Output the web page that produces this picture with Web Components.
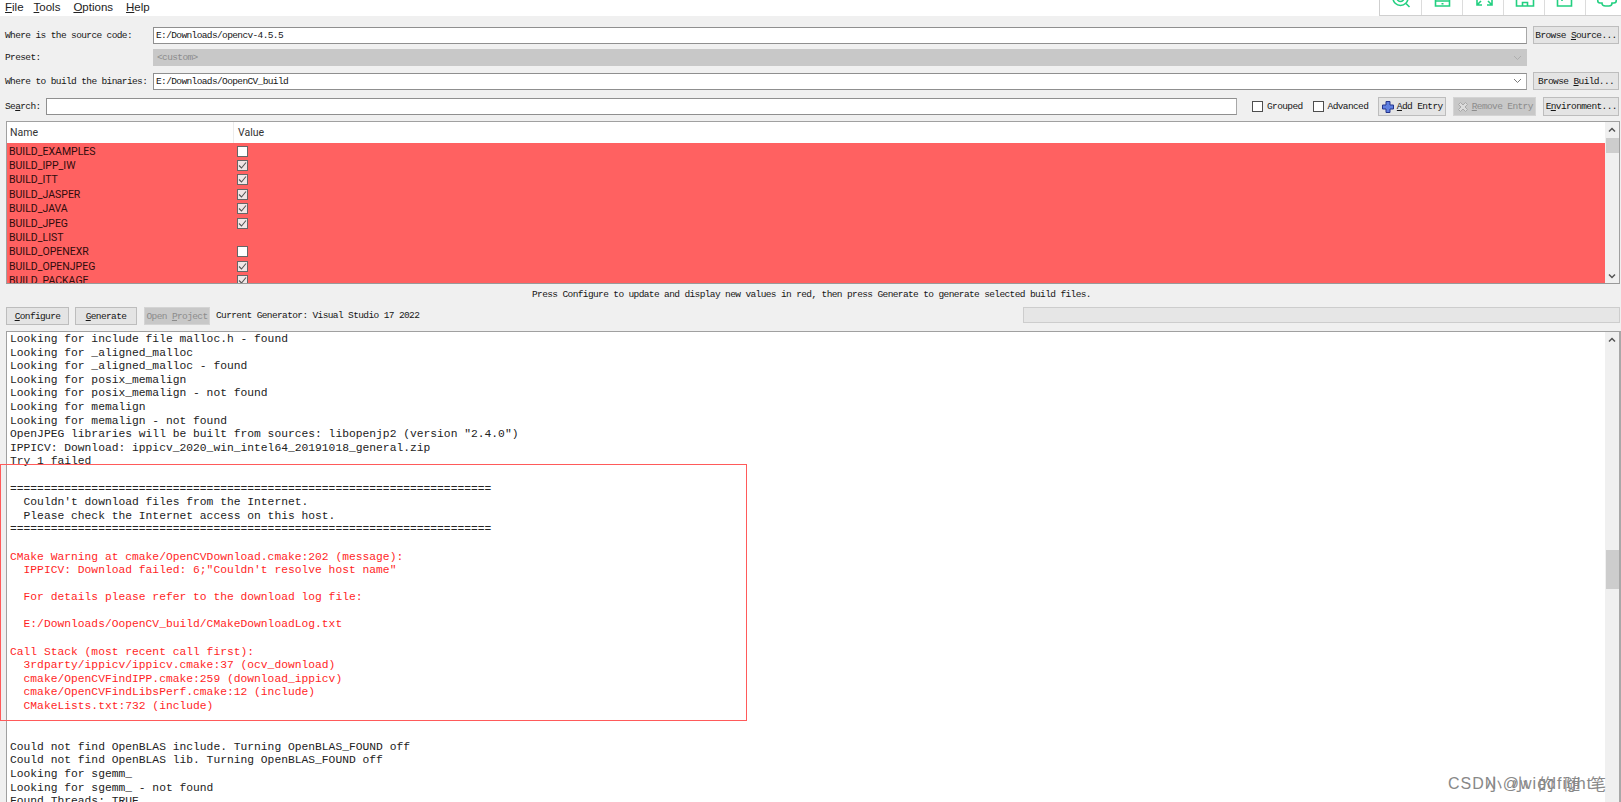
<!DOCTYPE html>
<html>
<head>
<meta charset="utf-8">
<style>
  html, body { margin: 0; padding: 0; height: 100%; overflow: hidden; background: #f0f0f0; }
  body { font-family: "Liberation Mono", monospace; }
</style>
</head>
<body>
<cmake-window></cmake-window>

<script>
const UI_FONT = 'Roboto, "Liberation Sans", sans-serif';
const SIM_TEXT = 'font: 9.5px "Liberation Mono", monospace; letter-spacing: -0.62px; color: #161616;';

class MenuBar extends HTMLElement {
  constructor() {
    super();
    this.shadowDOM = this.attachShadow({ mode: "open" });
  }

  connectedCallback() {
    this.shadowDOM.innerHTML = `
      <style>
        :host { display: flex; height: 16px; background: #fff; font: 11.5px "Liberation Sans", sans-serif; letter-spacing: 0; color: #222; position: relative; }
        .items { display: flex; gap: 13px; padding: 0 0 0 5px; line-height: 15px; }
        .items span:first-child { margin-right: -3px; }
        u { text-underline-offset: 1px; }
        ::slotted(tool-strip) { position: absolute; right: 0; top: 0; }
      </style>
      <div class="items">
        <span><u>F</u>ile</span><span><u>T</u>ools</span><span><u>O</u>ptions</span><span><u>H</u>elp</span>
      </div>
      <slot></slot>
    `;
  }
}
customElements.define("menu-bar", MenuBar);

class ToolStrip extends HTMLElement {
  constructor() {
    super();
    this.shadowDOM = this.attachShadow({ mode: "open" });
  }

  connectedCallback() {
    // the strip is cut by the top of the screenshot, so the shapes start above y=0
    const icons = [
      '<circle cx="20.500" cy="-2" r="7.500"/><circle cx="20.500" cy="-2" r="3.500"/><path d="M26 3.500l3.500 3.500"/>',
      '<path d="M13.500 -6h14v12h-14z"/><path d="M13.500 1h14M19.500 3.700h2"/>',
      '<path d="M14 0v5h5M14 5l4-4M29 0v5h-5M29 5l-4-4"/>',
      '<path d="M12.500 6v-8l8.500-6 8.500 6v8z"/><path d="M18.500 6v-3.500h5V6"/>',
      '<path d="M12.500 -6h14v12h-14z"/><path d="M17 -6v7"/>',
      '<path d="M14 -3C11 -1 11 3 14 3h2c0 2 1.500 3 3.500 3h3.500c2 0 3-1 3-3h2c3 0 3-4 0-6"/>'
    ];
    this.shadowDOM.innerHTML = `
      <style>
        :host { display: flex; height: 15px; border-left: 1px solid #cfcfcf; border-bottom: 1px solid #cfcfcf; }
        .cell { width: 40px; height: 15px; border-right: 1px solid #dcdcdc; overflow: hidden; }
        .cell:nth-child(2) { width: 41px; }
        .cell:last-child { border-right: 0; width: 35px; }
        svg { display: block; width: 41px; height: 15px; fill: none; stroke: #22cf80; stroke-width: 1.6; }
      </style>
      ${icons.map(i => `<div class="cell"><svg viewBox="0 0 41 15">${i}</svg></div>`).join("")}
    `;
  }
}
customElements.define("tool-strip", ToolStrip);

class QtButton extends HTMLElement {
  constructor() {
    super();
    this.shadowDOM = this.attachShadow({ mode: "open" });
  }

  connectedCallback() {
    this.shadowDOM.innerHTML = `
      <style>
        :host { display: inline-flex; align-items: center; justify-content: center; gap: 3px; box-sizing: border-box;
          height: 18px; border: 1px solid #bdbdbd; background: #e4e4e4; ${SIM_TEXT} white-space: pre; flex: none; }
        :host([disabled]) { background: #c8c8c8; color: #8c8c8c; border-color: #d4d4d4; }
      </style>
      <slot></slot>
    `;
  }
}
customElements.define("qt-button", QtButton);

class QtField extends HTMLElement {
  constructor() {
    super();
    this.shadowDOM = this.attachShadow({ mode: "open" });
  }

  connectedCallback() {
    const arrow = this.hasAttribute("arrow")
      ? `<svg width="9" height="6" viewBox="0 0 9 6"><path d="M1 1l3.500 3.500L8 1" fill="none" stroke="${this.hasAttribute("disabled") ? "#aeaeae" : "#7a7a7a"}" stroke-width="1"/></svg>`
      : "";
    this.shadowDOM.innerHTML = `
      <style>
        :host { display: flex; align-items: center; box-sizing: border-box; height: 17px; min-width: 0;
          border: 1px solid #8f8f8f; border-right-color: #a8a8a8; background: #fff; ${SIM_TEXT}
          padding: 0 4px 0 2px; white-space: pre; }
        :host([disabled]) { background: #c8c8c8; border-color: #c8c8c8; color: #8c8c8c; padding-left: 3px; }
        .txt { flex: 1; }
      </style>
      <span class="txt"><slot></slot></span>${arrow}
    `;
  }
}
customElements.define("qt-field", QtField);

class PathRow extends HTMLElement {
  constructor() {
    super();
    this.shadowDOM = this.attachShadow({ mode: "open" });
  }

  connectedCallback() {
    this.shadowDOM.innerHTML = `
      <style>
        :host { display: grid; grid-template-columns: 142px 1fr 86px; column-gap: 6px; align-items: center;
          height: 17px; ${SIM_TEXT} white-space: pre; padding: 0 2px 0 5px; }
      </style>
      <span>${this.getAttribute("label")}</span>
      <slot name="field"></slot>
      <slot name="action"><span></span></slot>
    `;
  }
}
customElements.define("path-row", PathRow);

class QtCheck extends HTMLElement {
  constructor() {
    super();
    this.shadowDOM = this.attachShadow({ mode: "open" });
  }

  connectedCallback() {
    this.shadowDOM.innerHTML = `
      <style>
        :host { display: inline-flex; align-items: center; gap: 4px; ${SIM_TEXT} flex: none; white-space: pre; }
        .box { box-sizing: border-box; width: 11px; height: 11px; border: 1px solid #4e4e4e; background: #fff; flex: none; }
      </style>
      <span class="box"></span><span><slot></slot></span>
    `;
  }
}
customElements.define("qt-check", QtCheck);

class ScrollTrack extends HTMLElement {
  constructor() {
    super();
    this.shadowDOM = this.attachShadow({ mode: "open" });
  }

  connectedCallback() {
    const top = this.getAttribute("thumb-top");
    const height = this.getAttribute("thumb-height");
    const down = this.hasAttribute("down");
    this.shadowDOM.innerHTML = `
      <style>
        :host { display: block; width: 14px; flex: none; background: #f0f0f0; position: relative; }
        .thumb { position: absolute; left: 1px; right: 0; top: ${top}px; height: ${height}px; background: #cdcdcd; }
        svg { position: absolute; left: 3px; }
        .up { top: 5px; }
        .down { bottom: 4px; }
      </style>
      <svg class="up" width="8" height="6" viewBox="0 0 8 6"><path d="M1 4.500L4 1.500l3 3" fill="none" stroke="#555" stroke-width="1.500"/></svg>
      <div class="thumb"></div>
      ${down ? '<svg class="down" width="8" height="6" viewBox="0 0 8 6"><path d="M1 1.500L4 4.500l3-3" fill="none" stroke="#555" stroke-width="1.500"/></svg>' : ""}
    `;
  }
}
customElements.define("scroll-track", ScrollTrack);

class CacheTable extends HTMLElement {
  constructor() {
    super();
    this.shadowDOM = this.attachShadow({ mode: "open" });
  }

  connectedCallback() {
    const rows = [
      ["BUILD_EXAMPLES", 0], ["BUILD_IPP_IW", 1], ["BUILD_ITT", 1], ["BUILD_JASPER", 1],
      ["BUILD_JAVA", 1], ["BUILD_JPEG", 1], ["BUILD_LIST", -1], ["BUILD_OPENEXR", 0],
      ["BUILD_OPENJPEG", 1], ["BUILD_PACKAGE", 1]
    ];
    const tick = '<svg width="9" height="9" viewBox="0 0 9 9"><path d="M1 4.500l2.500 2.500L8 1.500" fill="none" stroke="#555" stroke-width="1.100"/></svg>';
    this.shadowDOM.innerHTML = `
      <style>
        :host { display: flex; box-sizing: border-box; height: 163px; margin: 0 1px 0 6px; letter-spacing: 0;
          border: 1px solid #a0a0a0; border-bottom-color: #999; background: #fff; overflow: hidden; }
        .main { flex: 1; min-width: 0; overflow: hidden; }
        .head { display: grid; grid-template-columns: 226px 1fr; height: 21px; align-items: center; background: #fff; font: 10.5px ${UI_FONT}; color: #333; }
        .head span { padding-left: 3px; }
        .head span + span { padding-left: 4px; border-left: 1px solid #ececec; line-height: 21px; }
        .body { background: #ff6161; height: 140px; padding-top: 1px; box-sizing: border-box; overflow: hidden; }
        .row { display: grid; grid-template-columns: 226px 1fr; height: 14.4px; align-items: center; font: 10.5px ${UI_FONT}; color: #300c0c; }
        .row > span:first-child { padding-left: 2px; }
        .box { display: flex; align-items: center; justify-content: center; box-sizing: border-box; width: 11px; height: 11px; background: #fff; border: 1px solid #666; margin-left: 4px; }
        .box.on { background: #f0e6e6; }
      </style>
      <div class="main">
        <div class="head"><span>Name</span><span>Value</span></div>
        <div class="body">
          ${rows.map(([n, v]) => `<div class="row"><span>${n}</span><span>${v < 0 ? "" : `<div class="box ${v ? "on" : ""}">${v ? tick : ""}</div>`}</span></div>`).join("")}
        </div>
      </div>
      <scroll-track thumb-top="16" thumb-height="15" down></scroll-track>
    `;
  }
}
customElements.define("cache-table", CacheTable);

class OutputLog extends HTMLElement {
  constructor() {
    super();
    this.shadowDOM = this.attachShadow({ mode: "open" });
  }

  connectedCallback() {
    const lines = [
      ["", "Looking for include file malloc.h - found"],
      ["", "Looking for _aligned_malloc"],
      ["", "Looking for _aligned_malloc - found"],
      ["", "Looking for posix_memalign"],
      ["", "Looking for posix_memalign - not found"],
      ["", "Looking for memalign"],
      ["", "Looking for memalign - not found"],
      ["", 'OpenJPEG libraries will be built from sources: libopenjp2 (version "2.4.0")'],
      ["", "IPPICV: Download: ippicv_2020_win_intel64_20191018_general.zip"],
      ["", "Try 1 failed"],
      ["", " "],
      ["", "======================================================================="],
      ["", "  Couldn't download files from the Internet."],
      ["", "  Please check the Internet access on this host."],
      ["", "======================================================================="],
      ["", " "],
      ["err", "CMake Warning at cmake/OpenCVDownload.cmake:202 (message):"],
      ["err", '  IPPICV: Download failed: 6;"Couldn\'t resolve host name"'],
      ["err", " "],
      ["err", "  For details please refer to the download log file:"],
      ["err", " "],
      ["err", "  E:/Downloads/OopenCV_build/CMakeDownloadLog.txt"],
      ["err", " "],
      ["err", "Call Stack (most recent call first):"],
      ["err", "  3rdparty/ippicv/ippicv.cmake:37 (ocv_download)"],
      ["err", "  cmake/OpenCVFindIPP.cmake:259 (download_ippicv)"],
      ["err", "  cmake/OpenCVFindLibsPerf.cmake:12 (include)"],
      ["err", "  CMakeLists.txt:732 (include)"],
      ["", " "],
      ["", " "],
      ["", "Could not find OpenBLAS include. Turning OpenBLAS_FOUND off"],
      ["", "Could not find OpenBLAS lib. Turning OpenBLAS_FOUND off"],
      ["", "Looking for sgemm_"],
      ["", "Looking for sgemm_ - not found"],
      ["", "Found Threads: TRUE"]
    ];
    this.shadowDOM.innerHTML = `
      <style>
        :host { display: flex; flex: 1; min-height: 0; margin: 0 0 0 6px; box-sizing: border-box; letter-spacing: 0;
          border: 1px solid #a0a0a0; border-bottom: 0; border-right: 2px solid #a8a8a8; background: #fff; overflow: hidden; }
        .text { flex: 1; min-width: 0; padding: 1px 0 0 3px; overflow: hidden; font: 11.3px/13.6px "Liberation Mono", monospace; color: #222; white-space: pre; }
        .err { color: #ff1f1f; }
      </style>
      <div class="text">${lines.map(([c, t]) => `<div class="${c}">${t}</div>`).join("")}</div>
      <scroll-track thumb-top="218" thumb-height="39"></scroll-track>
    `;
  }
}
customElements.define("output-log", OutputLog);

class CmakeWindow extends HTMLElement {
  constructor() {
    super();
    this.shadowDOM = this.attachShadow({ mode: "open" });
  }

  connectedCallback() {
    this.shadowDOM.innerHTML = `
      <style>
        :host { display: flex; flex-direction: column; height: 802px; width: 1621px; position: relative; background: #f0f0f0; ${SIM_TEXT} }
        .paths { display: flex; flex-direction: column; gap: 6px; padding-top: 10px; }
        .search { display: flex; align-items: center; height: 17px; margin-top: 9px; padding: 0 2px 0 5px; white-space: pre; }
        .search span.lbl { width: 35px; flex: none; }
        .search qt-field { width: 1191px; margin: 0 15px 0 6px; flex: none; }
        .search .grp { margin-right: 10px; }
        .search .adv { margin-right: 10px; }
        .search .add { width: 68px; height: 19px; margin-right: 7px; }
        .search .rem { width: 83px; height: 19px; margin-right: 7px; }
        .search .env { width: 76px; height: 19px; }
        cache-table { margin-top: 6px; }
        .hint { height: 21px; display: flex; align-items: center; white-space: pre; padding-left: 532px; }
        .actions { display: flex; align-items: flex-start; height: 18px; margin-top: 2px; padding: 0 1px 0 6px; white-space: pre; }
        .actions .cfg { width: 63px; margin-right: 6px; }
        .actions .gen { width: 62px; margin-right: 7px; }
        .actions .open { width: 66px; margin-right: 6px; }
        .actions .cur { line-height: 18px; }
        .progress { width: 597px; height: 16px; margin-left: auto; box-sizing: border-box; border: 1px solid #cdcdcd; background: #e6e6e6; }
        output-log { margin-top: 6px; }
        .callout { position: absolute; left: 0; top: 464px; width: 747px; height: 257px; box-sizing: border-box; border: 1px solid #ff5a5a; pointer-events: none; }
        .mark { position: absolute; left: 1448px; top: 775px; font: 16px "Liberation Sans", sans-serif; color: #888; white-space: pre; letter-spacing: 1px; }
        .mark + .mark { left: 1486px; top: 774px; font-family: "Noto Sans CJK SC", sans-serif; font-size: 16px; line-height: 19px; letter-spacing: 10px; }
        u { text-underline-offset: 1px; }
      </style>
      <menu-bar><tool-strip></tool-strip></menu-bar>
      <div class="paths">
        <path-row label="Where is the source code:">
          <qt-field slot="field">E:/Downloads/opencv-4.5.5</qt-field>
          <qt-button slot="action"><span>Browse <u>S</u>ource...</span></qt-button>
        </path-row>
        <path-row label="Preset:">
          <qt-field slot="field" disabled arrow>&lt;custom&gt;</qt-field>
        </path-row>
        <path-row label="Where to build the binaries:">
          <qt-field slot="field" arrow>E:/Downloads/OopenCV_build</qt-field>
          <qt-button slot="action"><span>Browse <u>B</u>uild...</span></qt-button>
        </path-row>
      </div>
      <div class="search">
        <span class="lbl">Se<u>a</u>rch:</span>
        <qt-field></qt-field>
        <qt-check class="grp">Grouped</qt-check>
        <qt-check class="adv">Advanced</qt-check>
        <qt-button class="add"><svg width="12" height="12" viewBox="0 0 12 12"><path d="M4 .5h4v3.500h3.500v4H8v3.500H4V8H.5V4H4z" fill="#5f7fe0" stroke="#24348c"/></svg><span><u>A</u>dd Entry</span></qt-button>
        <qt-button class="rem" disabled><svg width="12" height="12" viewBox="0 0 12 12"><path d="M1.500 3.500l2-2L6 4l2.500-2.500 2 2L8 6l2.500 2.500-2 2L6 8l-2.500 2.500-2-2L4 6z" fill="#dcdcdc" stroke="#a8a8a8"/></svg><span><u>R</u>emove Entry</span></qt-button>
        <qt-button class="env"><span>E<u>n</u>vironment...</span></qt-button>
      </div>
      <cache-table></cache-table>
      <div class="hint">Press Configure to update and display new values in red, then press Generate to generate selected build files.</div>
      <div class="actions">
        <qt-button class="cfg"><span><u>C</u>onfigure</span></qt-button>
        <qt-button class="gen"><span><u>G</u>enerate</span></qt-button>
        <qt-button class="open" disabled><span>Open <u>P</u>roject</span></qt-button>
        <span class="cur">Current Generator: Visual Studio 17 2022</span>
        <div class="progress"></div>
      </div>
      <output-log></output-log>
      <div class="callout"></div>
      <span class="mark">CSDN @wiodfight</span>
      <span class="mark">小小的随笔</span>
    `;
  }
}
customElements.define("cmake-window", CmakeWindow);
</script>
</body>
</html>
